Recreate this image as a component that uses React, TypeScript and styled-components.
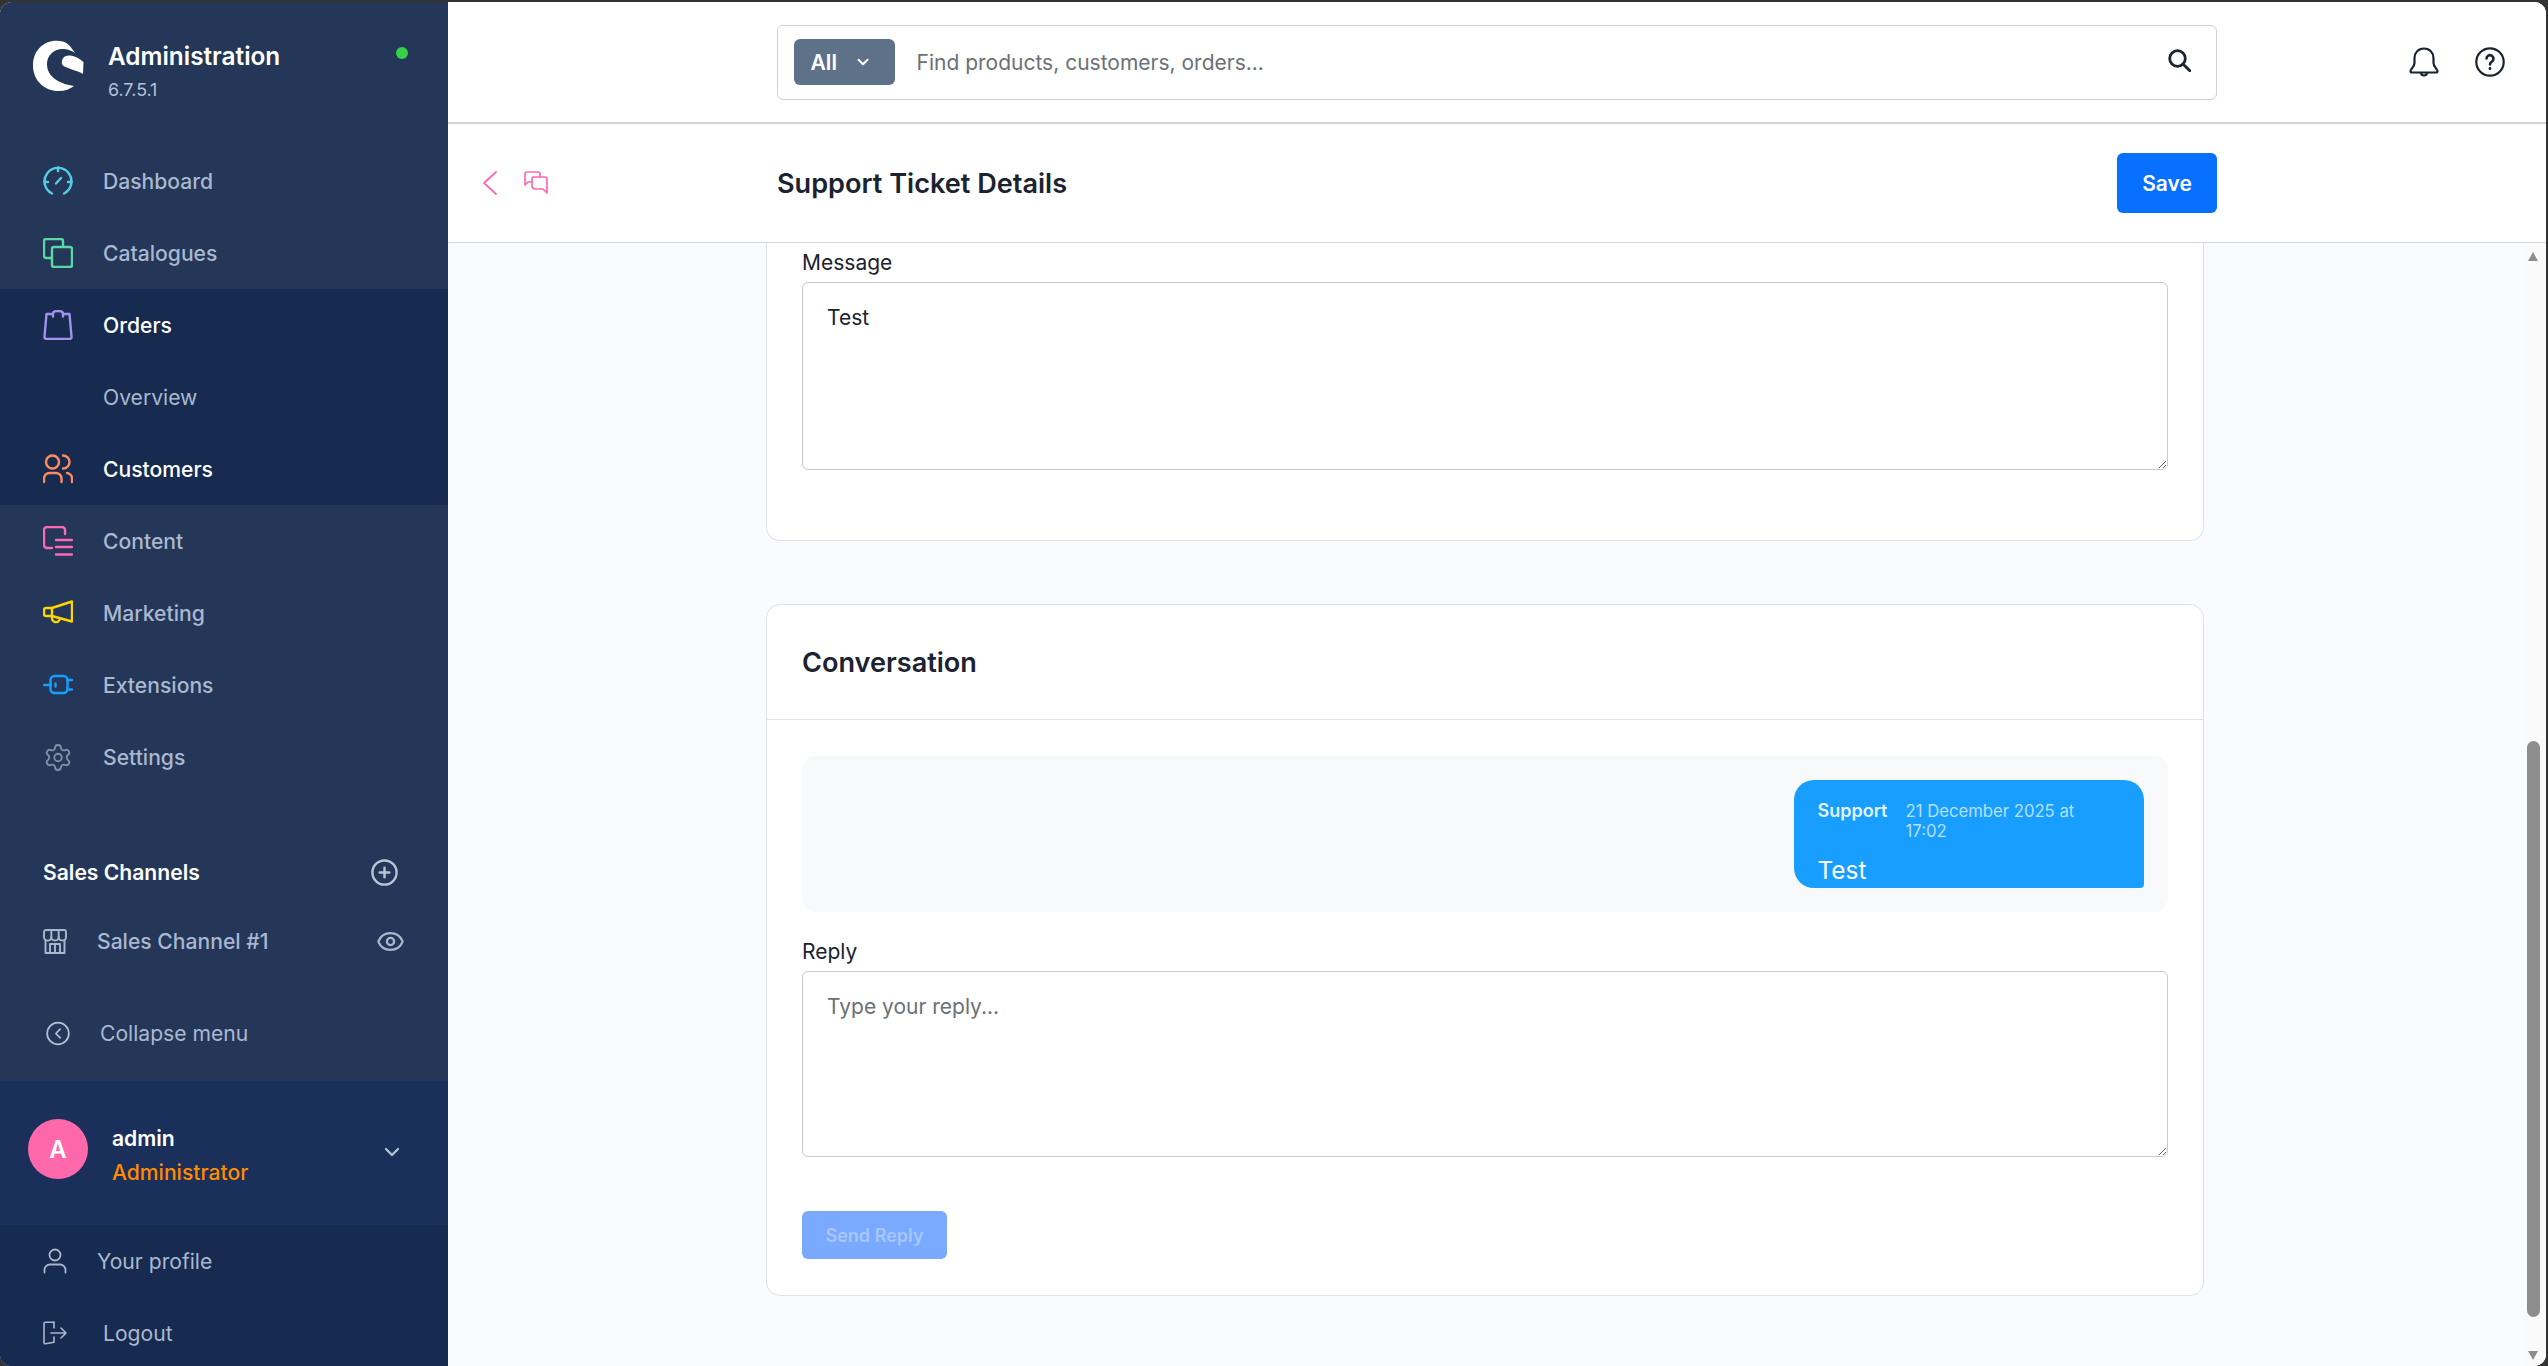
import React from "react";
import styled, { createGlobalStyle } from "styled-components";
import {
	ChevronDown,
	CircleChevronLeft,
	CirclePlus,
	Eye,
	Settings,
} from "lucide-react";

const GlobalStyle = createGlobalStyle`
	html, body {
		margin: 0;
		padding: 0;
		height: 100%;
		overflow: hidden;
		background: #333;
	}
	* {
		box-sizing: border-box;
	}
	body {
		font-family: Inter, "Liberation Sans", sans-serif;
		color: #1b2230;
	}
`;

const Frame = styled.div`
	width: 2548px;
	height: 1366px;
	padding: 2px 2px 0 0;
	background: #333;
`;

const Shell = styled.div`
	display: flex;
	height: 100%;
	overflow: hidden;
	border-radius: 12px;
	background: #fff;
`;

const Sidebar = styled.aside`
	flex: 0 0 448px;
	display: flex;
	flex-direction: column;
	overflow: hidden;
	background: #243758;
	& > * {
		flex-shrink: 0;
	}
`;

const Brand = styled.div`
	position: relative;
	height: 143px;
	display: flex;
	padding: 38px 0 0 33px;
	gap: 24px;
`;

const BrandText = styled.div`
	display: flex;
	flex-direction: column;
	gap: 7px;
`;

const BrandName = styled.div`
	font-size: 24.375px;
	line-height: 33px;
	font-weight: 600;
	color: #fff;
`;

const Version = styled.div`
	font-size: 17.875px;
	line-height: 20px;
	color: #b3c0d4;
`;

const StatusDot = styled.span`
	position: absolute;
	top: 45px;
	left: 396px;
	width: 12px;
	height: 12px;
	border-radius: 50%;
	background: #37d046;
`;

const NavGroup = styled.div<{ $active?: boolean }>`
	background: ${(p) => (p.$active ? "#172a4f" : "transparent")};
`;

const Row = styled.div<{ $indent?: number }>`
	height: 72px;
	display: flex;
	align-items: center;
	padding-left: ${(p) => p.$indent ?? 43}px;
`;

const IconSlot = styled.span<{ $width?: number; $color?: string; $gap?: number }>`
	display: flex;
	align-items: center;
	justify-content: center;
	width: ${(p) => p.$width ?? 30}px;
	margin-right: ${(p) => p.$gap ?? 30}px;
	color: ${(p) => p.$color ?? "#a9b8cd"};
`;

const RowLabel = styled.span<{ $strong?: boolean; $light?: boolean }>`
	font-size: 21.125px;
	font-weight: ${(p) => (p.$light ? 400 : 500)};
	color: ${(p) => (p.$strong ? "#fff" : "#a9b8d0")};
`;

const ChannelsHeader = styled.div`
	margin-top: 55px;
	height: 48px;
	padding: 0 49px 0 43px;
	display: flex;
	align-items: center;
	justify-content: space-between;
	color: #b8c4d6;
`;

const ChannelsTitle = styled.span`
	font-size: 21.125px;
	font-weight: 600;
	color: #fff;
`;

const ChannelRow = styled(Row)`
	margin-top: 9px;
	padding-right: 43px;
`;

const ChannelEye = styled.span`
	margin-left: auto;
	display: flex;
	color: #a9b8cd;
`;

const CollapseRow = styled(Row)`
	margin-top: 20px;
`;

const UserPanel = styled.div`
	margin-top: 12px;
	height: 144px;
	padding: 0 44px 0 28px;
	display: flex;
	align-items: center;
	background: #1a2f5a;
`;

const Avatar = styled.div`
	width: 60px;
	height: 60px;
	margin: 0 24px 8px 0;
	border-radius: 50%;
	display: flex;
	align-items: center;
	justify-content: center;
	background: #ff68ab;
	color: #fff;
	font-size: 24px;
	font-weight: 600;
`;

const UserText = styled.div`
	display: flex;
	flex-direction: column;
	gap: 7px;
	flex: 1;
	margin-top: 6px;
`;

const UserName = styled.div`
	font-size: 21.125px;
	line-height: 26px;
	font-weight: 600;
	color: #fff;
`;

const UserRole = styled.div`
	font-size: 21.125px;
	line-height: 27px;
	font-weight: 500;
	color: #ff8c00;
`;

const UserChevron = styled.span`
	display: flex;
	color: #b3c0d4;
	margin-bottom: 2px;
`;

const UserMenu = styled.div`
	background: #172a4f;
`;

const Main = styled.main`
	flex: 1;
	min-width: 0;
	display: flex;
	flex-direction: column;
	background: #fafbfe;
`;

const TopBar = styled.header`
	flex: 0 0 122px;
	display: flex;
	align-items: center;
	padding: 0 41px 0 329px;
	background: #fff;
	border-bottom: 2px solid #d1d1d6;
`;

const SearchBox = styled.div`
	width: 1440px;
	height: 75px;
	display: flex;
	align-items: center;
	padding: 0 25.5px 0 15.5px;
	border: 1.5px solid #d1d1d6;
	border-radius: 6px;
`;

const ScopeButton = styled.div`
	width: 101px;
	height: 46px;
	display: flex;
	align-items: center;
	gap: 17px;
	padding-left: 17px;
	border-radius: 6px;
	background: #5d7289;
	color: #fff;
	font-size: 21.125px;
	font-weight: 600;
`;

const SearchHint = styled.span`
	margin-left: 22px;
	flex: 1;
	font-size: 21px;
	color: #6b7078;
`;

const SearchMark = styled.span`
	display: flex;
	margin-top: -4px;
	color: #1b2230;
`;

const TopIcons = styled.div`
	margin-left: auto;
	display: flex;
	align-items: center;
	gap: 36px;
	color: #1b2230;
`;

const SubBar = styled.div`
	flex: 0 0 119px;
	display: flex;
	align-items: center;
	padding-left: 35px;
	background: #fff;
	border-bottom: 1.5px solid #d5d5da;
`;

const SubNav = styled.div`
	width: 294px;
	display: flex;
	align-items: center;
	gap: 27px;
	color: #ff68b4;
`;

const ChatMark = styled.span`
	display: flex;
	margin-top: -2px;
`;

const PageTitle = styled.h1`
	margin: 0;
	flex: 0 0 1340px;
	font-size: 27.1px;
	font-weight: 600;
	color: #1b2230;
`;

const PrimaryButton = styled.button<{ $disabled?: boolean }>`
	border: 0;
	border-radius: 6px;
	font-family: inherit;
	font-weight: 600;
	background: ${(p) => (p.$disabled ? "#79aaff" : "#0870ff")};
	color: ${(p) => (p.$disabled ? "#a7c7ff" : "#fff")};
	font-size: ${(p) => (p.$disabled ? "18px" : "21px")};
	width: ${(p) => (p.$disabled ? "145px" : "100px")};
	height: ${(p) => (p.$disabled ? "48px" : "60px")};
`;

const SaveButton = styled(PrimaryButton)`
	flex: 0 0 100px;
`;

const Scroller = styled.div`
	position: relative;
	flex: 1;
	min-height: 0;
	overflow: hidden;
	padding-left: 318px;
`;

const Card = styled.section<{ $clipped?: boolean }>`
	width: 1438px;
	background: #fff;
	border: 1.5px solid #e0e1e7;
	border-top-width: ${(p) => (p.$clipped ? 0 : "1.5px")};
	border-radius: ${(p) => (p.$clipped ? "0 0 14px 14px" : "14px")};
	margin-bottom: 63px;
`;

const CardBody = styled.div<{ $top: number; $bottom: number }>`
	padding: ${(p) => p.$top}px 35px ${(p) => p.$bottom}px;
`;

const CardHeader = styled.div`
	height: 115px;
	display: flex;
	align-items: center;
	padding: 0 35px;
	border-bottom: 1.5px solid #e0e1e7;
	font-size: 27.1px;
	font-weight: 600;
	color: #1b2230;
`;

const FieldLabel = styled.label`
	display: block;
	font-size: 21px;
	line-height: 26px;
	margin-bottom: 6px;
	color: #1b2230;
`;

const TextArea = styled.textarea<{ $height: number }>`
	display: block;
	width: 100%;
	height: ${(p) => p.$height}px;
	padding: 22px 24px;
	border: 1.5px solid #c9c9ce;
	border-radius: 6px;
	background: #fff;
	font-family: inherit;
	font-size: 21px;
	line-height: 26px;
	color: #1b2230;
	outline: none;
	&::placeholder {
		color: #6b7078;
		opacity: 1;
	}
`;

const ChatArea = styled.div`
	height: 156px;
	margin-bottom: 27px;
	padding: 24px;
	display: flex;
	justify-content: flex-end;
	border-radius: 14px;
	background: #f8f9fb;
`;

const Bubble = styled.div`
	width: 350px;
	height: 108px;
	padding: 20px 24px 0 23.5px;
	border-radius: 20px 20px 4px 20px;
	background: #189eff;
`;

const BubbleMeta = styled.div`
	display: flex;
	align-items: baseline;
	gap: 18px;
`;

const BubbleAuthor = styled.span`
	font-size: 18px;
	font-weight: 600;
	color: #e3f3ff;
`;

const BubbleDate = styled.span`
	font-size: 16.7px;
	color: #b5e0ff;
`;

const BubbleText = styled.div`
	margin-top: 13px;
	font-size: 24.375px;
	line-height: 32px;
	color: #fff;
`;

const ReplyActions = styled.div`
	margin-top: 54px;
`;

const ScrollTrack = styled.div`
	position: absolute;
	top: 0;
	right: 0;
	bottom: 0;
	width: 20px;
	background: #fafafa;
`;

const ScrollThumb = styled.div`
	position: absolute;
	top: 498px;
	left: 1px;
	width: 13px;
	height: 576px;
	border-radius: 7px;
	background: #8e8e8e;
`;

const ScrollArrow = styled.div<{ $down?: boolean }>`
	position: absolute;
	left: 2px;
	${(p) => (p.$down ? "bottom: 6px;" : "top: 9px;")}
	width: 0;
	height: 0;
	border-left: 5.5px solid transparent;
	border-right: 5.5px solid transparent;
	${(p) => (p.$down ? "border-top: 9px solid #8e8e8e;" : "border-bottom: 9px solid #8e8e8e;")}
`;

const Logo = () => (
	<svg width="51" height="51" viewBox="0 0 51 51" fill="#fff">
		<path d="M30 1.500C13-2 0 9 0 25.500 0 41 12 51 25.500 51c6.500 0 11.500-2 15.500-5C28 44 14 38 14 24 14 14 23 8 31 9c5 .5 8 2 11 4-4-6-7-10-12-11.500Z" />
		<path d="M29 24c-1-6 3-9 8-8.500 5 .5 10 3.500 13.500 6.500l-.5 12c-6-4-20-6-21-10Z" />
	</svg>
);

const strokeProps = {
	fill: "none",
	stroke: "currentColor",
	strokeWidth: 2.4,
	strokeLinecap: "round" as const,
	strokeLinejoin: "round" as const,
};

const NavSvg = ({ children }: { children: React.ReactNode }) => (
	<svg width="30" height="30" viewBox="0 0 30 30" {...strokeProps}>
		{children}
	</svg>
);

const DashboardIcon = () => (
	<NavSvg>
		<path d="M9 27.500A13.500 13.500 0 1 1 21 27.500" />
		<path d="M15 1.500V5M1.500 16H5M25 16h3.500M13 17.500l5-5.500" />
	</NavSvg>
);

const CatalogueIcon = () => (
	<NavSvg>
		<path d="M8.500 20H3a2 2 0 0 1-2-2V3a2 2 0 0 1 2-2h15a2 2 0 0 1 2 2v5.500" />
		<rect x="9" y="9" width="20" height="20" rx="2" />
	</NavSvg>
);

const OrdersIcon = () => (
	<NavSvg>
		<path d="M10 4H3.500L1.500 26.500a2 2 0 0 0 2 2.500h23a2 2 0 0 0 2-2.500L26.500 4H20" />
		<path d="M10 6.500V3.500a5 2.500 0 0 1 10 0v3" />
	</NavSvg>
);

const CustomersIcon = () => (
	<NavSvg>
		<circle cx="9.500" cy="8" r="6.500" />
		<path d="M20 1.500a6.500 6.500 0 0 1 0 13M1 28v-3.500a5.500 5.500 0 0 1 5.500-5.500h6a5.500 5.500 0 0 1 6 5.500V28M24 19a5.500 5.500 0 0 1 5 5.500V28" />
	</NavSvg>
);

const ContentIcon = () => (
	<NavSvg>
		<path d="M22 8V4a3 3 0 0 0-3-3H4a3 3 0 0 0-3 3v15a3 3 0 0 0 3 3h5" />
		<path d="M13 14h16M13 21h16M13 28.500h16" />
	</NavSvg>
);

const MarketingIcon = () => (
	<NavSvg>
		<path d="M9 10 29 3.500V23.500L9 18Z" />
		<path d="M9 10H3a2 2 0 0 0-2 2v4a2 2 0 0 0 2 2h6" />
		<path d="M9 18.500v2a4 4 0 0 0 7.500 1.500" />
	</NavSvg>
);

const ExtensionsIcon = () => (
	<NavSvg>
		<rect x="7.500" y="6" width="17" height="17" rx="4" />
		<path d="M1 15h6.500M24.500 10H29M24.500 19.500H29M12.500 13.500v3" />
	</NavSvg>
);

const StoreIcon = () => (
	<svg width="24" height="25" viewBox="0 0 24 25" {...strokeProps} strokeWidth={1.9}>
		<path d="M3 1h18a2 2 0 0 1 2 2v5a3.670 3.670 0 0 1-7.330 0 3.670 3.670 0 0 1-7.330 0A3.670 3.670 0 0 1 1 8V3a2 2 0 0 1 2-2Z" />
		<path d="M8.330 8V1M15.670 8V1M2.500 11.500V24h19V11.500M7 24V15h10v9M12 15v9" />
	</svg>
);

const ProfileIcon = () => (
	<svg width="24" height="26" viewBox="0 0 24 26" {...strokeProps} strokeWidth={1.8}>
		<circle cx="12" cy="7" r="5.500" />
		<path d="M1.500 24.500v-2.500a5.500 5.500 0 0 1 5.500-5.500h10a5.500 5.500 0 0 1 5.500 5.500v2.500" />
	</svg>
);

const LogoutIcon = () => (
	<svg width="24" height="24" viewBox="0 0 24 24" {...strokeProps} strokeWidth={1.6}>
		<path d="M11 1.200H2.500a1.500 1.500 0 0 0-1.500 1.500v19a1.200 1.200 0 0 0 1.500 1l8.500-1.500V16" />
		<path d="M11 7V1.200M8 12h15M18 7l5 5-5 5" />
	</svg>
);

const BackIcon = () => (
	<svg width="14" height="24" viewBox="0 0 14 24" fill="none" stroke="currentColor" strokeWidth="1.8" strokeLinecap="round" strokeLinejoin="round">
		<path d="M13 1 1 12l12 11" />
	</svg>
);

const ChatIcon = () => (
	<svg width="24" height="23" viewBox="0 0 24 23" fill="none" stroke="currentColor" strokeWidth="1.7" strokeLinecap="round" strokeLinejoin="round">
		<path d="M16 6V3a2 2 0 0 0-2-2H3a2 2 0 0 0-2 2v11l3-3h3" />
		<path d="M9 6h12a2 2 0 0 1 2 2v14l-4-4h-8a3 3 0 0 1-3-3V8a2 2 0 0 1 1-2Z" />
	</svg>
);

const SearchIcon = () => (
	<svg width="23" height="23" viewBox="0 0 23 23" fill="none" stroke="currentColor" strokeWidth="2.800" strokeLinecap="round">
		<circle cx="9.500" cy="9.500" r="7.800" />
		<path d="m15 15 6.800 6.800" />
	</svg>
);

const BellIcon = () => (
	<svg width="30" height="30" viewBox="0 0 30 30" fill="none" stroke="currentColor" strokeWidth="2.200" strokeLinejoin="round">
		<path d="M15 1.500C9 1.500 5.500 6 5.500 11v5C5.500 20 1.500 22 1.500 24c0 1 .5 1.500 1.500 1.500h24c1 0 1.500-.5 1.500-1.500 0-2-4-4-4-8v-5C24.500 6 21 1.500 15 1.500Z" />
		<path d="M12 25.500a3 3 0 0 0 6 0" />
	</svg>
);

const HelpIcon = () => (
	<svg width="30" height="30" viewBox="0 0 30 30" fill="none" stroke="currentColor" strokeWidth="2.200" strokeLinecap="round">
		<circle cx="15" cy="15" r="13.700" />
		<path d="M11.500 11.500a3.500 3.500 0 1 1 5.500 3c-1.200.8-2 1.500-2 3" strokeWidth="2.600" />
		<path d="M15 21.500v.2" strokeWidth="2.800" />
	</svg>
);

const items = [
	{ label: "Dashboard", icon: <DashboardIcon />, color: "#57cbe6" },
	{ label: "Catalogues", icon: <CatalogueIcon />, color: "#57d9a3" },
];

const lowerItems = [
	{ label: "Content", icon: <ContentIcon />, color: "#ff68b4" },
	{ label: "Marketing", icon: <MarketingIcon />, color: "#ffd500" },
	{ label: "Extensions", icon: <ExtensionsIcon />, color: "#189eff" },
	{ label: "Settings", icon: <Settings size={35} strokeWidth={1.5} />, color: "#7f90a8" },
];

const App = (): React.JSX.Element => {
	return (
		<Frame>
			<GlobalStyle />
			<Shell>
				<Sidebar>
					<Brand>
						<Logo />
						<BrandText>
							<BrandName>Administration</BrandName>
							<Version>6.7.5.1</Version>
						</BrandText>
						<StatusDot />
					</Brand>

					{items.map((item) => (
						<Row key={item.label}>
							<IconSlot $color={item.color}>{item.icon}</IconSlot>
							<RowLabel>{item.label}</RowLabel>
						</Row>
					))}
					<NavGroup $active>
						<Row>
							<IconSlot $color="#a092f0">
								<OrdersIcon />
							</IconSlot>
							<RowLabel $strong>Orders</RowLabel>
						</Row>
						<Row $indent={103}>
							<RowLabel $light>Overview</RowLabel>
						</Row>
						<Row>
							<IconSlot $color="#ff8a5c">
								<CustomersIcon />
							</IconSlot>
							<RowLabel $strong>Customers</RowLabel>
						</Row>
					</NavGroup>
					{lowerItems.map((item) => (
						<Row key={item.label}>
							<IconSlot $color={item.color}>{item.icon}</IconSlot>
							<RowLabel>{item.label}</RowLabel>
						</Row>
					))}

					<ChannelsHeader>
						<ChannelsTitle>Sales Channels</ChannelsTitle>
						<CirclePlus size={29} strokeWidth={2} />
					</ChannelsHeader>
					<ChannelRow>
						<IconSlot $width={24}>
							<StoreIcon />
						</IconSlot>
						<RowLabel>Sales Channel #1</RowLabel>
						<ChannelEye>
							<Eye size={29} strokeWidth={1.9} />
						</ChannelEye>
					</ChannelRow>
					<CollapseRow $indent={45}>
						<IconSlot $width={26} $gap={29} $color="#b3c0d4">
							<CircleChevronLeft size={29} strokeWidth={1.6} />
						</IconSlot>
						<RowLabel $light>Collapse menu</RowLabel>
					</CollapseRow>

					<UserPanel>
						<Avatar>A</Avatar>
						<UserText>
							<UserName>admin</UserName>
							<UserRole>Administrator</UserRole>
						</UserText>
						<UserChevron>
							<ChevronDown size={24} strokeWidth={2.4} />
						</UserChevron>
					</UserPanel>
					<UserMenu>
						<Row>
							<IconSlot $width={24}>
								<ProfileIcon />
							</IconSlot>
							<RowLabel $light>Your profile</RowLabel>
						</Row>
						<Row>
							<IconSlot $width={24} $gap={36}>
								<LogoutIcon />
							</IconSlot>
							<RowLabel $light>Logout</RowLabel>
						</Row>
					</UserMenu>
				</Sidebar>

				<Main>
					<TopBar>
						<SearchBox>
							<ScopeButton>
								All
								<ChevronDown size={18} strokeWidth={2.6} />
							</ScopeButton>
							<SearchHint>Find products, customers, orders...</SearchHint>
							<SearchMark>
								<SearchIcon />
							</SearchMark>
						</SearchBox>
						<TopIcons>
							<BellIcon />
							<HelpIcon />
						</TopIcons>
					</TopBar>

					<SubBar>
						<SubNav>
							<BackIcon />
							<ChatMark>
								<ChatIcon />
							</ChatMark>
						</SubNav>
						<PageTitle>Support Ticket Details</PageTitle>
						<SaveButton>Save</SaveButton>
					</SubBar>

					<Scroller>
						<Card $clipped>
							<CardBody $top={7} $bottom={70}>
								<FieldLabel>Message</FieldLabel>
								<TextArea $height={188} defaultValue="Test" />
							</CardBody>
						</Card>
						<Card>
							<CardHeader>Conversation</CardHeader>
							<CardBody $top={36} $bottom={36}>
								<ChatArea>
									<Bubble>
										<BubbleMeta>
											<BubbleAuthor>Support</BubbleAuthor>
											<BubbleDate>21 December 2025 at 17:02</BubbleDate>
										</BubbleMeta>
										<BubbleText>Test</BubbleText>
									</Bubble>
								</ChatArea>
								<FieldLabel>Reply</FieldLabel>
								<TextArea $height={186} placeholder="Type your reply..." />
								<ReplyActions>
									<PrimaryButton $disabled>Send Reply</PrimaryButton>
								</ReplyActions>
							</CardBody>
						</Card>
						<ScrollTrack>
							<ScrollArrow />
							<ScrollThumb />
							<ScrollArrow $down />
						</ScrollTrack>
					</Scroller>
				</Main>
			</Shell>
		</Frame>
	);
};

export default App;
